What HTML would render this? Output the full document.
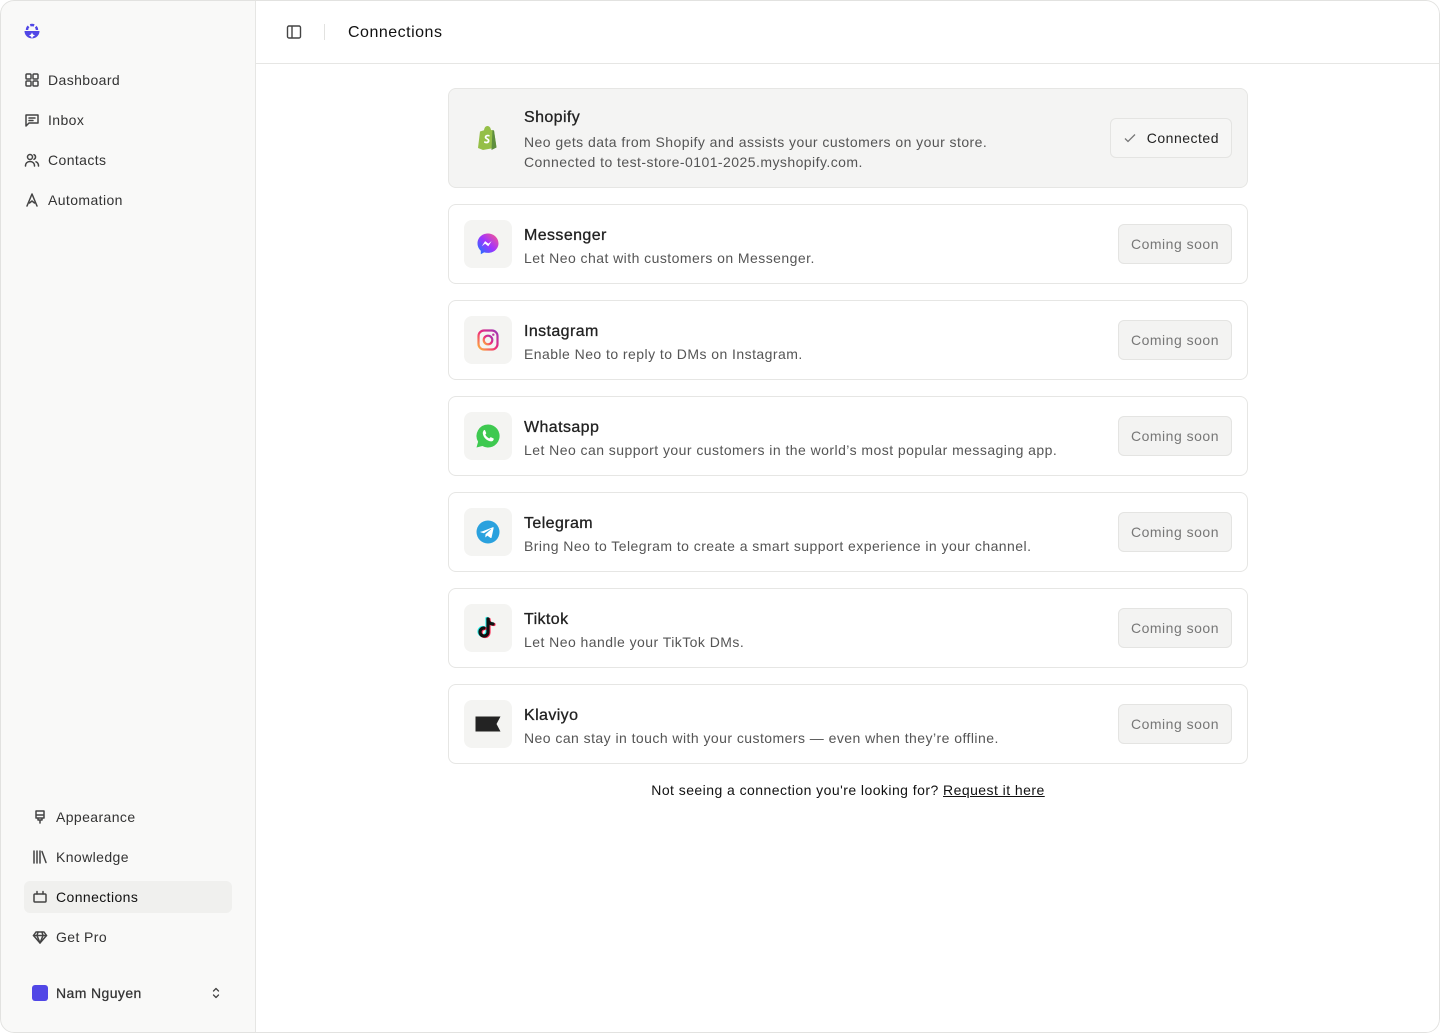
<!DOCTYPE html>
<html><head><meta charset="utf-8"><style>
*{box-sizing:border-box;margin:0;padding:0}
body{width:1440px;height:1033px;background:#fff;font-family:"Liberation Sans",sans-serif;color:#1a1a1a;overflow:hidden;position:relative;letter-spacing:0.4px}
.frame{position:absolute;left:0;top:0;width:1440px;height:1033px;border-radius:14px;overflow:hidden;background:#fff}
.frame:after{content:"";position:absolute;inset:0;border:1px solid #e2e2e0;border-radius:14px;pointer-events:none}
.side{position:absolute;left:0;top:0;width:256px;height:1033px;background:#f9f9f8;border-right:1px solid #e6e6e4}
.nav{position:absolute;left:24px;display:flex;align-items:center;font-size:14px;color:#333;height:24px}
.nav svg{width:16px;height:16px;margin-right:8px;fill:none;stroke:#444;stroke-width:1.5;stroke-linecap:round;stroke-linejoin:round}
.nav.b{left:32px}
.active{position:absolute;left:24px;top:881px;width:208px;height:32px;background:#f0f0ee;border-radius:6px}
.hdr{position:absolute;left:256px;top:0;right:0;height:64px;border-bottom:1px solid #e6e6e4}
.card{position:absolute;left:448px;width:800px;height:80px;border:1px solid #e6e6e4;border-radius:8px;background:#fff}
.card.sh{height:100px;background:#f4f4f3}
.ic{position:absolute;left:15px;top:15px;width:48px;height:48px;border-radius:8px;background:#f4f4f2;display:flex;align-items:center;justify-content:center}
.t{position:absolute;left:75px;top:21px;font-size:16px;font-weight:500;color:#222;line-height:20px;-webkit-text-stroke:0.3px #222}
.d{position:absolute;left:75px;top:43px;font-size:14px;color:#555;line-height:20px;letter-spacing:0.45px}
.btn{position:absolute;right:15px;top:19px;height:40px;padding:0 12px;border:1px solid #e4e4e2;background:#f3f3f2;border-radius:6px;font-size:14px;color:#777;display:flex;align-items:center;letter-spacing:0.5px}
</style></head><body><div class="frame">
<div class="side">
<svg style="position:absolute;left:23px;top:23px" width="18" height="18" viewBox="0 0 18 18"><path d="M1.5 8 A7.5 7.5 0 0 0 16.5 8 Z" fill="#5147e6"/><path d="M4 7 A5 5 0 0 1 14 7" stroke="#5147e6" stroke-width="2.4" fill="none" stroke-dasharray="4 2"/><path d="M9 9.5 l1 2 2 1 -2 1 -1 2 -1-2 -2-1 2-1z" fill="#fff"/></svg>
<div class="nav" style="top:68px"><svg viewBox="0 0 16 16"><rect x="2" y="2" width="5" height="5" rx="1"/><rect x="9" y="2" width="5" height="5" rx="1"/><rect x="2" y="9" width="5" height="5" rx="1"/><rect x="9" y="9" width="5" height="5" rx="1"/></svg>Dashboard</div>
<div class="nav" style="top:108px"><svg viewBox="0 0 16 16"><path d="M2 3h12v8H5l-3 3z"/><path d="M5 6h6M5 8.5h4"/></svg>Inbox</div>
<div class="nav" style="top:148px"><svg viewBox="0 0 16 16"><circle cx="6" cy="5" r="2.5"/><path d="M1.5 14c0-3 2-4.5 4.5-4.5s4.5 1.5 4.5 4.5"/><path d="M10 2.7a2.5 2.5 0 0 1 0 4.6M12 9.8c1.5.6 2.5 2 2.5 4.2"/></svg>Contacts</div>
<div class="nav" style="top:188px"><svg viewBox="0 0 16 16"><path d="M3 14L8 2l5 12M5.5 11L8 9l2.5 2"/></svg>Automation</div>
<div class="active"></div>
<div class="nav b" style="top:805px"><svg viewBox="0 0 16 16"><path d="M4 2h8v7H4zM4 6h8M6 9v2h4V9M8 11v3"/></svg>Appearance</div>
<div class="nav b" style="top:845px"><svg viewBox="0 0 16 16"><path d="M2 2v12M5 2v12M8 2v12M10 2.5l4 11"/></svg>Knowledge</div>
<div class="nav b" style="top:885px;color:#111"><svg viewBox="0 0 16 16"><rect x="2" y="5" width="12" height="8" rx="1"/><path d="M5 5V2.5M11 5V2.5"/></svg>Connections</div>
<div class="nav b" style="top:925px"><svg viewBox="0 0 16 16"><path d="M4 3h8l2.5 3.5L8 14 1.5 6.5z"/><path d="M1.5 6.5h13M6 3L5 6.5 8 14l3-7.5L10 3"/></svg>Get Pro</div>
<div style="position:absolute;left:32px;top:985px;width:16px;height:16px;background:#5147e6;border-radius:3px"></div>
<div style="position:absolute;left:56px;top:984px;font-size:14px;font-weight:500;color:#333;line-height:18px;-webkit-text-stroke:0.25px #333">Nam Nguyen</div>
<svg style="position:absolute;left:209px;top:986px" width="14" height="14" viewBox="0 0 14 14" fill="none" stroke="#444" stroke-width="1.3" stroke-linecap="round" stroke-linejoin="round"><path d="M4.5 5L7 2.5 9.5 5M4.5 9L7 11.5 9.5 9"/></svg>
</div>
<div class="hdr">
<svg style="position:absolute;left:30px;top:24px" width="16" height="16" viewBox="0 0 16 16" fill="none" stroke="#444" stroke-width="1.4"><rect x="1.5" y="2" width="13" height="12" rx="1.5"/><path d="M6 2v12"/></svg>
<div style="position:absolute;left:68px;top:24px;width:1px;height:16px;background:#e2e2e0"></div>
<div style="position:absolute;left:92px;top:23px;font-size:16px;color:#111;line-height:20px;letter-spacing:0.5px">Connections</div>
</div>

<div class="card sh" style="top:88px">
<svg style="position:absolute;left:28px;top:36px" width="22" height="26" viewBox="0 0 22 26"><path d="M3 6.5l4-1.3C7.5 2 9 1 10.5 1S13.5 2 14 5l3 .5 2.5 17-13.5 2.5L1 23z" fill="#95bf47"/><path d="M17 5.5l2.5 17-5 2.5 1-20z" fill="#5e8e3e"/><path d="M12.7 10.2c-.5-.3-1.3-.5-2-.5-2 0-3 1.3-3 2.5 0 2 3 2.2 3 3.4 0 .7-.7 1-1.3 1-1 0-2-.6-2-.6l-.4 1.6s.9.8 2.4.8c2 0 3.1-1.2 3.1-2.8 0-2.3-3-2.4-3-3.4 0-.4.3-.8 1.2-.8.8 0 1.6.3 1.6.3z" fill="#fff"/></svg>
<div class="t" style="top:19px">Shopify</div>
<div class="d">Neo gets data from Shopify and assists your customers on your store.<br>Connected to test-store-0101-2025.myshopify.com.</div>
<div class="btn" style="top:29px;background:#f6f6f5;color:#222"><svg width="14" height="14" viewBox="0 0 14 14" style="margin-right:10px" fill="none" stroke="#777" stroke-width="1.3"><path d="M2 7.5l3 3 7-7"/></svg>Connected</div>
</div>

<div class="card" style="top:204px"><div class="ic"><svg width="24" height="24" viewBox="0 0 24 24"><defs><linearGradient id="m" x1="0" y1="1" x2="1" y2="0"><stop offset="0" stop-color="#0a7cff"/><stop offset=".5" stop-color="#a033ff"/><stop offset="1" stop-color="#ff5c87"/></linearGradient></defs><path d="M12 1.5C6 1.5 1.5 5.8 1.5 11.4c0 3 1.3 5.5 3.3 7.3v3.6l3.3-1.9c1.2.3 2.5.5 3.9.5 6 0 10.5-4.3 10.5-9.5S18 1.5 12 1.5z" fill="url(#m)"/><path d="M5.8 14.3l3.3-5.2 3.3 2.5 3.2-2.5-3.3 5.2-3.2-2.5z" fill="#fff"/></svg></div><div class="t">Messenger</div><div class="d">Let Neo chat with customers on Messenger.</div><div class="btn">Coming soon</div></div>

<div class="card" style="top:300px"><div class="ic"><svg width="22" height="22" viewBox="0 0 22 22"><defs><linearGradient id="ig" x1="0" y1="1" x2="1" y2="0"><stop offset="0" stop-color="#fdb43a"/><stop offset=".5" stop-color="#ee2a7b"/><stop offset="1" stop-color="#9b36b7"/></linearGradient></defs><rect x="1.5" y="1.5" width="19" height="19" rx="5.5" fill="none" stroke="url(#ig)" stroke-width="2.2"/><circle cx="11" cy="11" r="4.3" fill="none" stroke="url(#ig)" stroke-width="2.2"/><circle cx="16.3" cy="5.7" r="1.2" fill="#c23aa0"/></svg></div><div class="t">Instagram</div><div class="d">Enable Neo to reply to DMs on Instagram.</div><div class="btn">Coming soon</div></div>

<div class="card" style="top:396px"><div class="ic"><svg width="26" height="26" viewBox="0 0 26 26"><path d="M13 1.5a11.5 11.5 0 0 0-9.9 17.3L1.5 24.5l5.9-1.5A11.5 11.5 0 1 0 13 1.5z" fill="#3ec950"/><path d="M9.3 7c.4 0 .7 0 .9.6l1 2.4c.1.3 0 .5-.2.8l-.7.8c.9 1.7 2.2 3 4 3.9l.9-1c.2-.3.5-.3.8-.2l2.4 1.1c.3.2.4.4.3.8-.2 1.3-1.4 2.3-2.7 2.2-4.2-.4-7.700-3.8-8.2-8-.1-1.5.9-3.2 1.5-3.4z" fill="#fff"/></svg></div><div class="t">Whatsapp</div><div class="d">Let Neo can support your customers in the world’s most popular messaging app.</div><div class="btn">Coming soon</div></div>

<div class="card" style="top:492px"><div class="ic"><svg width="24" height="24" viewBox="0 0 24 24"><circle cx="12" cy="12" r="11.5" fill="#2aa1de"/><path d="M5.3 11.7l11.5-4.5c.5-.2 1 .1.8 1l-2 9.2c-.1.6-.6.8-1.1.5l-3.1-2.3-1.5 1.4c-.2.2-.3.3-.6.3l.2-3.1 5.7-5.1c.2-.2 0-.4-.3-.2l-7 4.4-3-.9c-.7-.2-.7-.6.4-1z" fill="#fff"/></svg></div><div class="t">Telegram</div><div class="d">Bring Neo to Telegram to create a smart support experience in your channel.</div><div class="btn">Coming soon</div></div>

<div class="card" style="top:588px"><div class="ic"><svg width="22" height="24" viewBox="0 0 22 24"><g fill="none" stroke-width="3.2" stroke-linecap="round"><path d="M11 3v13a4 4 0 1 1-4-4" stroke="#25f4ee" transform="translate(-1,-0.5)"/><path d="M11 3c0 3 2 5 5 5" stroke="#25f4ee" transform="translate(-1,-0.5)"/><path d="M11 3v13a4 4 0 1 1-4-4" stroke="#fe2c55" transform="translate(1,0.5)"/><path d="M11 3c0 3 2 5 5 5" stroke="#fe2c55" transform="translate(1,0.5)"/><path d="M11 3v13a4 4 0 1 1-4-4" stroke="#111"/><path d="M11 3c0 3 2 5 5 5" stroke="#111"/></g></svg></div><div class="t">Tiktok</div><div class="d">Let Neo handle your TikTok DMs.</div><div class="btn">Coming soon</div></div>

<div class="card" style="top:684px"><div class="ic"><svg width="26" height="18" viewBox="0 0 26 18"><path d="M0.5 1.5h25l-4 7.5 4 7.5H0.5z" fill="#232323"/></svg></div><div class="t">Klaviyo</div><div class="d">Neo can stay in touch with your customers — even when they’re offline.</div><div class="btn">Coming soon</div></div>

<div style="position:absolute;left:448px;width:800px;top:781px;text-align:center;font-size:14px;color:#111;line-height:18px;letter-spacing:0.45px">Not seeing a connection you're looking for? <span style="text-decoration:underline">Request it here</span></div>
</div></body></html>
